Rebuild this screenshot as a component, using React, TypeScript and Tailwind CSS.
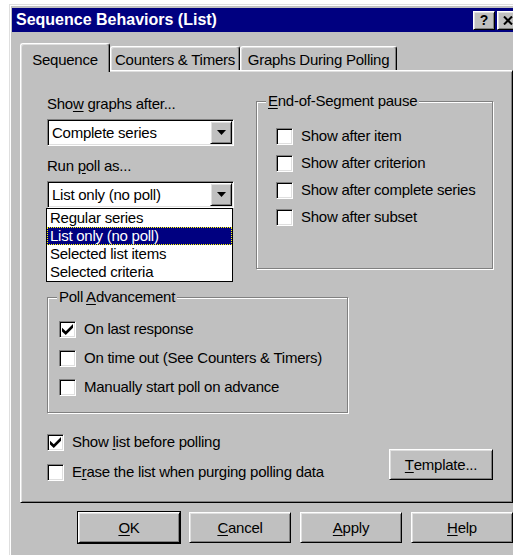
import type { ReactNode } from "react";

// Win95 bevels: raised for buttons/tabs, sunken for fields and checkboxes
const raised =
  "border border-t-white border-l-white border-r-black border-b-black shadow-[inset_1px_1px_0_#dfdfdf,inset_-1px_-1px_0_#808080]";
const sunken =
  "border border-t-[#808080] border-l-[#808080] border-r-white border-b-white shadow-[inset_1px_1px_0_#000,inset_-1px_-1px_0_#dfdfdf]";

function U({ children }: { children: ReactNode }) {
  return <span className="underline underline-offset-2">{children}</span>;
}

function Checkbox({ checked }: { checked?: boolean }) {
  return (
    <span className={`flex h-[17px] w-[17px] shrink-0 items-center justify-center bg-white ${sunken}`}>
      {checked && (
        <svg width="11" height="11" viewBox="0 0 7 7">
          <polygon points="0,2.4 2.4,4.6 7,0 7,2.4 2.4,7 0,4.8" fill="#000" />
        </svg>
      )}
    </span>
  );
}

function CheckRow({ checked, children }: { checked?: boolean; children: ReactNode }) {
  return (
    <div className="flex h-[18px] items-center gap-[8px]">
      <Checkbox checked={checked} />
      <span className="whitespace-nowrap">{children}</span>
    </div>
  );
}

function GroupBox({ label, className, children }: { label: ReactNode; className: string; children: ReactNode }) {
  return (
    <div className={`relative border border-[#808080] shadow-[inset_1px_1px_0_#fff,1px_1px_0_#fff] ${className}`}>
      <span className="absolute left-[9px] top-[-10px] bg-[#c0c0c0] px-[2px] leading-[18px] whitespace-nowrap">
        {label}
      </span>
      {children}
    </div>
  );
}

function Arrow() {
  return (
    <svg width="9" height="5" viewBox="0 0 9 5">
      <polygon points="0,0 9,0 4.5,5" fill="#000" />
    </svg>
  );
}

function Combo({ value, children }: { value: string; children?: ReactNode }) {
  return (
    <div className={`relative flex h-[27px] w-[187px] bg-white p-[1px] ${sunken}`}>
      <span className="flex-1 pl-[3px] leading-[23px] whitespace-nowrap">{value}</span>
      <span className={`flex w-[22px] items-center justify-center bg-[#c0c0c0] ${raised}`}>
        <Arrow />
      </span>
      {children}
    </div>
  );
}

function Button({ children, isDefault }: { children: ReactNode; isDefault?: boolean }) {
  return (
    <button
      className={`flex h-[31px] w-[102px] items-center justify-center bg-[#c0c0c0] ${raised} ${
        isDefault ? "outline outline-1 outline-black" : ""
      }`}
    >
      {children}
    </button>
  );
}

const pollOptions = ["Regular series", "List only (no poll)", "Selected list items", "Selected criteria"];

export default function App() {
  return (
    <div className="h-[555px] w-[513px] overflow-hidden bg-white font-['Liberation_Sans',Arial,sans-serif] text-[15px] leading-[18px] tracking-[-0.25px] text-black">
      <div
        className={`ml-[9px] mt-[4px] h-[560px] w-[515px] bg-[#c0c0c0] p-[2px] pt-[3px] border border-t-[#dfdfdf] border-l-[#dfdfdf] border-r-black border-b-black shadow-[inset_1px_1px_0_#fff,inset_-1px_-1px_0_#808080]`}
      >
        {/* title bar */}
        <div className="flex h-[24px] items-center justify-between bg-[#000080] pl-[4px] pr-[2px]">
          <span className="text-[16px] font-bold tracking-normal text-white">Sequence Behaviors (List)</span>
          <div className="flex gap-[2px]">
            <span className={`flex h-[19px] w-[22px] items-center justify-center bg-[#c0c0c0] text-[14px] font-bold leading-none ${raised}`}>
              ?
            </span>
            <span className={`flex h-[19px] w-[22px] items-center justify-center bg-[#c0c0c0] ${raised}`}>
              <svg width="10" height="9" viewBox="0 0 10 9">
                <path d="M1 0.5 L9 8.5 M9 0.5 L1 8.5" stroke="#000" strokeWidth="2" />
              </svg>
            </span>
          </div>
        </div>

        {/* tabs */}
        <div className="ml-[8px] mt-[11px] flex h-[29px] items-end">
          <div className="relative z-10 h-[29px] w-[90px] rounded-t-[3px] border-l border-t border-r border-l-white border-t-white border-r-black bg-[#c0c0c0] pt-[7px] text-center shadow-[inset_-1px_0_0_#808080,inset_1px_1px_0_#dfdfdf]">
            Sequence
          </div>
          <div className="mb-[2px] h-[24px] w-[130px] rounded-t-[3px] border-l border-t border-r border-l-white border-t-white border-r-black pt-[4px] text-center shadow-[inset_-1px_0_0_#808080,inset_1px_1px_0_#dfdfdf]">
            Counters &amp; Timers
          </div>
          <div className="mb-[2px] h-[24px] w-[157px] rounded-t-[3px] border-l border-t border-r border-l-white border-t-white border-r-black pt-[4px] text-center shadow-[inset_-1px_0_0_#808080,inset_1px_1px_0_#dfdfdf]">
            Graphs During Polling
          </div>
        </div>

        {/* tab page */}
        <div className={`relative ml-[8px] -mt-[2px] h-[433px] w-[493px] pl-[26px] ${raised}`}>
          <div className="flex items-start">
            <div className="w-[187px] pt-[24px]">
              <div className="h-[18px] whitespace-nowrap">
                Sho<U>w</U> graphs after...
              </div>
              <div className="mt-[6px]">
                <Combo value="Complete series" />
              </div>
              <div className="mt-[11px] h-[18px] whitespace-nowrap">
                Run <U>p</U>oll as...
              </div>
              <div className="mt-[6px]">
                <Combo value="List only (no poll)">
                  <ul className="absolute left-[-2px] top-full z-20 mt-[1px] w-[187px] border border-black bg-white">
                    {pollOptions.map((opt, i) => (
                      <li
                        key={opt}
                        className={`h-[18px] whitespace-nowrap border pl-[2px] leading-[16px] ${
                          i === 1
                            ? "border-dotted border-[#ffff00] bg-[#000080] text-white"
                            : "border-transparent"
                        }`}
                      >
                        {opt}
                      </li>
                    ))}
                  </ul>
                </Combo>
              </div>
            </div>

            <GroupBox
              label={
                <>
                  <U>E</U>nd-of-Segment pause
                </>
              }
              className="ml-[22px] mt-[30px] h-[168px] w-[237px]"
            >
              <div className="flex flex-col gap-[9px] pl-[19px] pt-[25px]">
                <CheckRow>Show after item</CheckRow>
                <CheckRow>Show after criterion</CheckRow>
                <CheckRow>Show after complete series</CheckRow>
                <CheckRow>Show after subset</CheckRow>
              </div>
            </GroupBox>
          </div>

          <GroupBox
            label={
              <>
                Poll <U>A</U>dvancement
              </>
            }
            className="mt-[28px] h-[116px] w-[301px]"
          >
            <div className="flex flex-col gap-[11px] pl-[11px] pt-[22px]">
              <CheckRow checked>On last response</CheckRow>
              <CheckRow>On time out (See Counters &amp; Timers)</CheckRow>
              <CheckRow>Manually start poll on advance</CheckRow>
            </div>
          </GroupBox>

          <div className="mt-[20px] flex items-start">
            <div className="flex flex-col gap-[12px]">
              <CheckRow checked>
                Show <U>l</U>ist before polling
              </CheckRow>
              <CheckRow>
                E<U>r</U>ase the list when purging polling data
              </CheckRow>
            </div>
            <button
              className={`ml-auto mr-[19px] mt-[16px] flex h-[31px] w-[104px] items-center justify-center bg-[#c0c0c0] ${raised}`}
            >
              <U>T</U>emplate...
            </button>
          </div>
        </div>

        {/* dialog buttons */}
        <div className="ml-[8px] mt-[9px] flex w-[493px] justify-end gap-[9px]">
          <Button isDefault>
            <U>O</U>K
          </Button>
          <Button>
            <U>C</U>ancel
          </Button>
          <Button>
            <U>A</U>pply
          </Button>
          <Button>
            <U>H</U>elp
          </Button>
        </div>
      </div>
    </div>
  );
}
